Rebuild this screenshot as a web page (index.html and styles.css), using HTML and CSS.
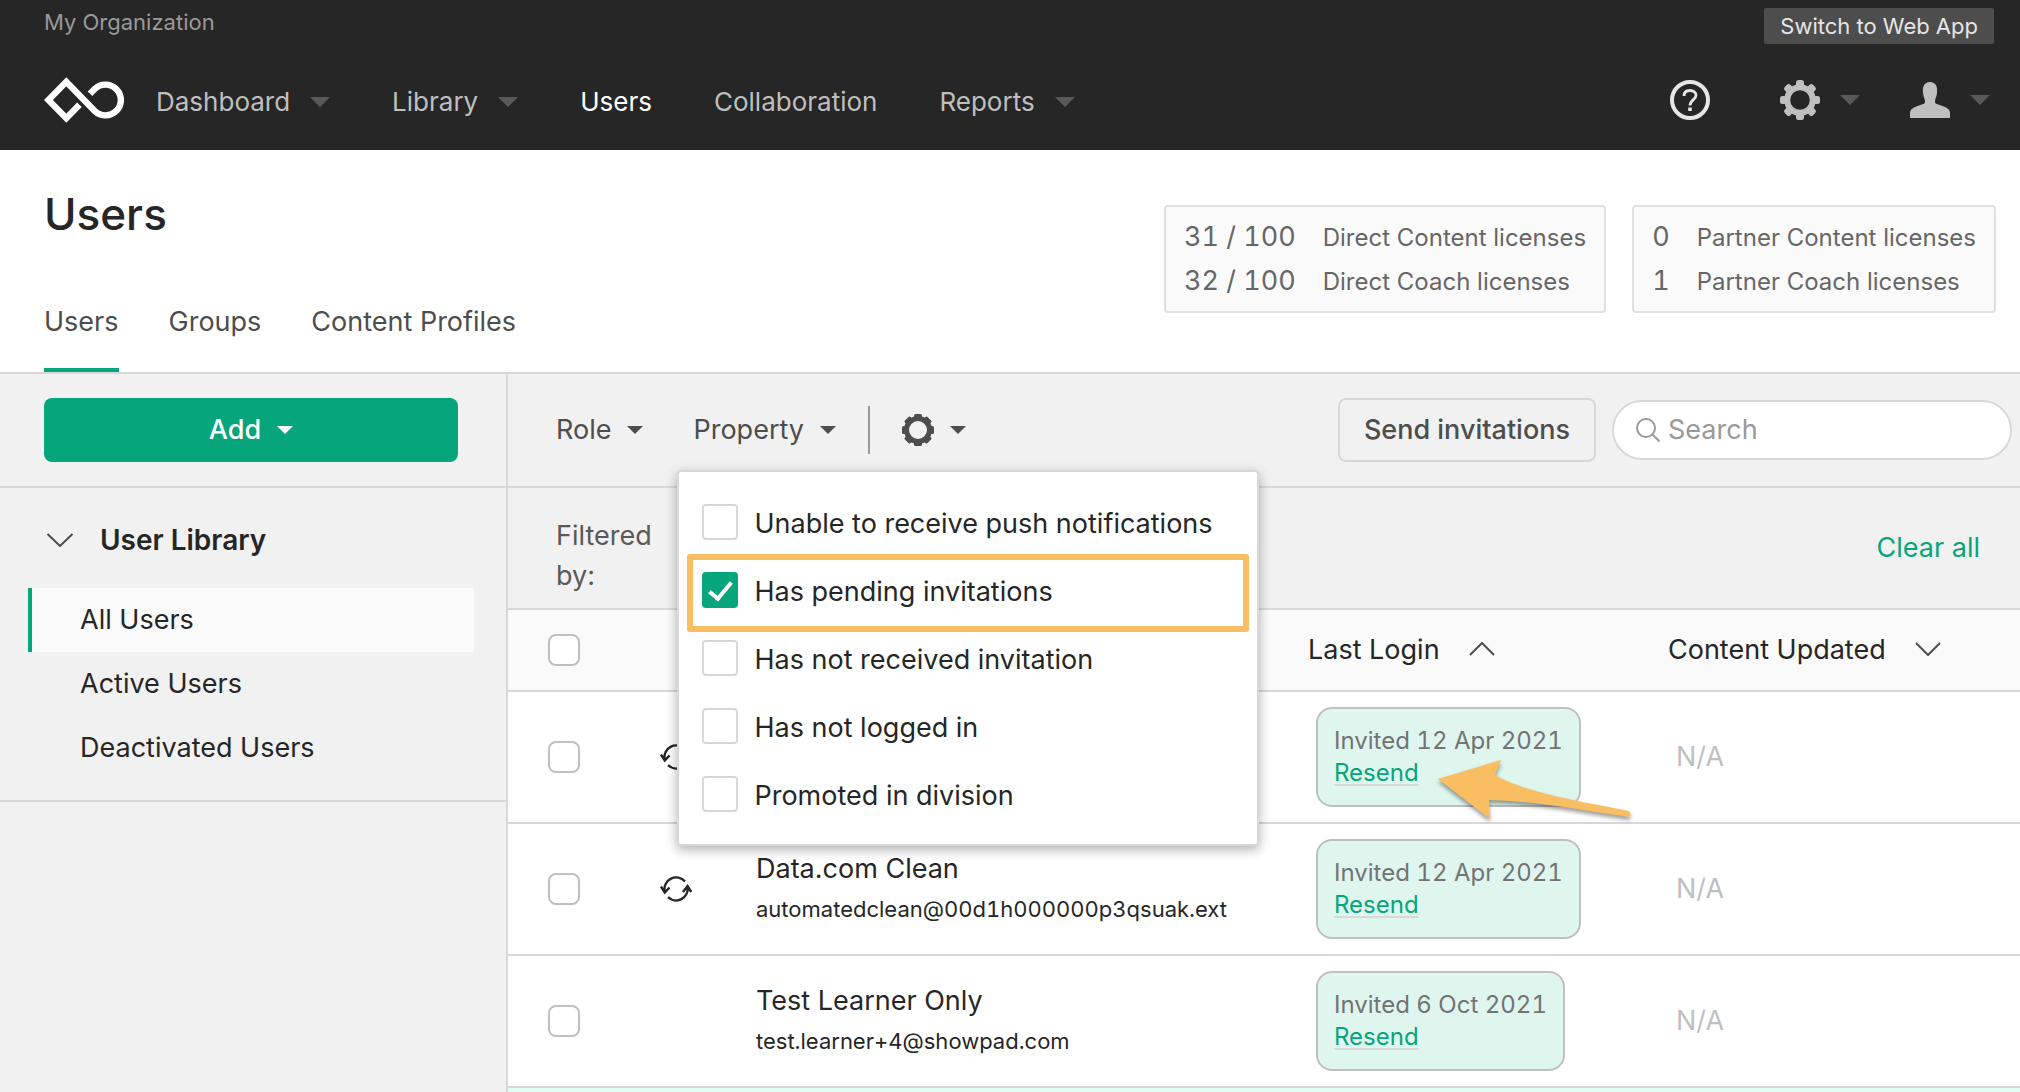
FILE: index.html
```
<!DOCTYPE html>
<html lang="en">
<head>
  <meta charset="UTF-8">
  <meta name="viewport" content="width=device-width, initial-scale=1">
  <title>Users</title>
  <link rel="stylesheet" href="styles.css">
</head>
<body>
  <!-- top bar -->
  <header class="topbar">
    <div class="topbar-row">
      <span class="org">My Organization</span>
      <button class="switch" type="button">Switch to Web App</button>
    </div>
    <div class="topbar-nav">
      <a class="logo" href="#" aria-label="Home">
        <svg width="80" height="46" viewBox="0 0 80 46" fill="none" stroke="#fff" stroke-width="6.4">
          <path d="M35.4 27.8L22.3 41.2L4.4 23L22.3 4.8L50.7 34A15.4 15.4 0 1 0 50.7 12L46 16.8"/>
        </svg>
      </a>
      <nav class="nav">
        <a href="#">Dashboard <i class="caret caret-lg"></i></a>
        <a href="#">Library <i class="caret caret-lg"></i></a>
        <a href="#" class="active">Users</a>
        <a href="#">Collaboration</a>
        <a href="#">Reports <i class="caret caret-lg"></i></a>
      </nav>
      <div class="tools">
        <button type="button" aria-label="Help">
          <svg width="40" height="40" viewBox="0 0 40 40" fill="none" stroke="#e6e6e6">
            <circle cx="20" cy="20" r="18" stroke-width="4"/>
            <path d="M14 16C14 12 16.500 10.500 20 10.500S26 12.500 26 15.500C26 19.500 20 20 20 25.500" stroke-width="2.800"/>
            <path d="M20 27.500V31" stroke-width="3.600"/>
          </svg>
        </button>
        <button type="button" aria-label="Settings">
          <svg width="40" height="40" viewBox="0 0 40 40" fill="#bfbfbf">
            <circle cx="20" cy="20" r="12.800" fill="none" stroke="#bfbfbf" stroke-width="6"/>
            <rect x="16" y="0" width="8" height="8" rx="2.500"/>
            <rect x="16" y="0" width="8" height="8" rx="2.500" transform="rotate(45 20 20)"/>
            <rect x="16" y="0" width="8" height="8" rx="2.500" transform="rotate(90 20 20)"/>
            <rect x="16" y="0" width="8" height="8" rx="2.500" transform="rotate(135 20 20)"/>
            <rect x="16" y="0" width="8" height="8" rx="2.500" transform="rotate(180 20 20)"/>
            <rect x="16" y="0" width="8" height="8" rx="2.500" transform="rotate(225 20 20)"/>
            <rect x="16" y="0" width="8" height="8" rx="2.500" transform="rotate(270 20 20)"/>
            <rect x="16" y="0" width="8" height="8" rx="2.500" transform="rotate(315 20 20)"/>
          </svg>
          <i class="caret caret-lg"></i>
        </button>
        <button type="button" aria-label="Account">
          <svg width="40" height="36" viewBox="0 0 40 36" fill="#bfbfbf">
            <path d="M20 0C26 0 27.800 5 27 11C26.500 15 25 17 25 19.500C25 22 27 22 31 23.500C37 25.500 40 27.500 40 31V36H0V31C0 27.500 3 25.500 9 23.500C13 22 15 22 15 19.500C15 17 13.500 15 13 11C12.200 5 14 0 20 0Z"/>
          </svg>
          <i class="caret caret-lg"></i>
        </button>
      </div>
    </div>
  </header>

  <!-- page title and tabs -->
  <div class="page-head">
    <div class="page-title">
      <h1>Users</h1>
      <nav class="tabs">
        <a href="#" class="active">Users</a>
        <a href="#">Groups</a>
        <a href="#">Content Profiles</a>
      </nav>
    </div>
    <div class="licenses">
      <div class="license">
        <b>31 / 100</b><span>Direct Content licenses</span>
        <b>32 / 100</b><span>Direct Coach licenses</span>
      </div>
      <div class="license">
        <b>0</b><span>Partner Content licenses</span>
        <b>1</b><span>Partner Coach licenses</span>
      </div>
    </div>
  </div>

  <div class="content">
    <!-- sidebar -->
    <aside class="sidebar">
      <div class="add-box">
        <button class="add" type="button">Add <i class="caret"></i></button>
      </div>
      <div class="library">
        <h2>
          <svg width="28" height="14" viewBox="0 0 28 14" fill="none" stroke="#4d4d4d" stroke-width="2"><path d="M1.500 1L14 13L26.500 1"/></svg>
          User Library
        </h2>
        <ul>
          <li><a href="#" class="active">All Users</a></li>
          <li><a href="#">Active Users</a></li>
          <li><a href="#">Deactivated Users</a></li>
        </ul>
      </div>
    </aside>

    <main class="main">
      <!-- toolbar -->
      <div class="toolbar">
        <button class="drop" type="button">Role <i class="caret"></i></button>
        <div class="property">
          <button class="drop" type="button">Property <i class="caret"></i></button>
          <div class="menu">
            <label><input type="checkbox"> Unable to receive push notifications</label>
            <label class="marked"><input type="checkbox" checked> Has pending invitations</label>
            <label><input type="checkbox"> Has not received invitation</label>
            <label><input type="checkbox"> Has not logged in</label>
            <label><input type="checkbox"> Promoted in division</label>
          </div>
        </div>
        <span class="line"></span>
        <button class="drop" type="button" aria-label="Options">
          <svg width="32" height="32" viewBox="0 0 32 32" fill="#4d4d4d">
            <circle cx="16" cy="16" r="11.500" fill="none" stroke="#4d4d4d" stroke-width="5"/>
            <rect x="12" y="0" width="8" height="5" rx="1.500"/>
            <rect x="12" y="0" width="8" height="5" rx="1.500" transform="rotate(45 16 16)"/>
            <rect x="12" y="0" width="8" height="5" rx="1.500" transform="rotate(90 16 16)"/>
            <rect x="12" y="0" width="8" height="5" rx="1.500" transform="rotate(135 16 16)"/>
            <rect x="12" y="0" width="8" height="5" rx="1.500" transform="rotate(180 16 16)"/>
            <rect x="12" y="0" width="8" height="5" rx="1.500" transform="rotate(225 16 16)"/>
            <rect x="12" y="0" width="8" height="5" rx="1.500" transform="rotate(270 16 16)"/>
            <rect x="12" y="0" width="8" height="5" rx="1.500" transform="rotate(315 16 16)"/>
          </svg>
          <i class="caret"></i>
        </button>
        <button class="send" type="button">Send invitations</button>
        <div class="search">
          <svg width="24" height="24" viewBox="0 0 24 24" fill="none" stroke="#999" stroke-width="2">
            <circle cx="10" cy="10" r="9"/>
            <path d="M16.500 16.500L23.500 23.500"/>
          </svg>
          <input type="text" placeholder="Search" aria-label="Search">
        </div>
      </div>

      <!-- filters -->
      <div class="filters">
        <span class="filters-label">Filtered by:</span>
        <a href="#">Clear all</a>
      </div>

      <!-- users -->
      <table class="users">
        <colgroup>
          <col class="col-check">
          <col class="col-sync">
          <col>
          <col class="col-login">
          <col class="col-updated">
        </colgroup>
        <thead>
          <tr>
            <th><input type="checkbox" aria-label="Select all"></th>
            <th></th>
            <th></th>
            <th>Last Login
              <svg class="sort" width="26" height="14" viewBox="0 0 26 14" fill="none" stroke="#4d4d4d" stroke-width="2"><path d="M1 13L13 1L25 13"/></svg>
            </th>
            <th>Content Updated
              <svg class="sort" width="26" height="14" viewBox="0 0 26 14" fill="none" stroke="#4d4d4d" stroke-width="2"><path d="M1 1L13 13L25 1"/></svg>
            </th>
          </tr>
        </thead>
        <tbody>
          <tr>
            <td><input type="checkbox" aria-label="Select user"></td>
            <td class="sync">
              <svg width="32" height="28" viewBox="0 0 32 28" fill="none" stroke="#262626" stroke-width="2.400">
                <path d="M25 6.500A11.600 11.600 0 0 0 4.800 16.500M1 11.500L4.800 17.500L9.500 12.500"/>
                <path d="M8 22.200A11.600 11.600 0 0 0 27.500 12M23 17L27.500 11L31.300 17"/>
              </svg>
            </td>
            <td></td>
            <td>
              <div class="pill">
                Invited 12 Apr 2021<br><a href="#">Resend</a>
                <svg class="arrow" width="200" height="70" viewBox="0 0 200 70">
                  <path fill="#f8be61" d="M2 22L65 3L59 18C88 35 140 44 193 54Q196 57 193 60C145 53 100 44 53 43L54 62Z"/>
                </svg>
              </div>
            </td>
            <td class="na">N/A</td>
          </tr>
          <tr>
            <td><input type="checkbox" aria-label="Select Data.com Clean"></td>
            <td class="sync">
              <svg width="32" height="28" viewBox="0 0 32 28" fill="none" stroke="#262626" stroke-width="2.400">
                <path d="M25 6.500A11.600 11.600 0 0 0 4.800 16.500M1 11.500L4.800 17.500L9.500 12.500"/>
                <path d="M8 22.200A11.600 11.600 0 0 0 27.500 12M23 17L27.500 11L31.300 17"/>
              </svg>
            </td>
            <td>
              <p class="name">Data.com Clean</p>
              <p class="email">automatedclean@00d1h000000p3qsuak.ext</p>
            </td>
            <td><div class="pill">Invited 12 Apr 2021<br><a href="#">Resend</a></div></td>
            <td class="na">N/A</td>
          </tr>
          <tr>
            <td><input type="checkbox" aria-label="Select Test Learner Only"></td>
            <td></td>
            <td>
              <p class="name">Test Learner Only</p>
              <p class="email">test.learner+4@showpad.com</p>
            </td>
            <td><div class="pill">Invited 6 Oct 2021<br><a href="#">Resend</a></div></td>
            <td class="na">N/A</td>
          </tr>
        </tbody>
      </table>
      <div class="next-row"></div>
    </main>
  </div>
</body>
</html>
```
FILE: styles.css
```
*,
*::before,
*::after{
  margin: 0;
  padding: 0;
  box-sizing: border-box;
}
body{
  display: flex;
  flex-direction: column;
  min-height: 100vh;
  font-family: Inter, "Liberation Sans", sans-serif;
  font-size: 27px;
  line-height: 40px;
  color: #262626;
  background: #fff;
}
ul{
  list-style: none;
}
a{
  color: inherit;
  text-decoration: none;
}
button,input{
  font: inherit;
  color: inherit;
}
button{
  background: none;
  border: 0;
  white-space: nowrap;
  cursor: pointer;
}
svg{
  display: block;
  flex: none;
}
.caret{
  flex: none;
  width: 16px;
  border: 8px solid transparent;
  border-top-color: currentColor;
  border-bottom: 0;
}
.caret-lg{
  width: 20px;
  border-width: 10px 10px 0;
  color: #595959;
}

/* top bar */
.topbar{
  height: 150px;
  padding-top: 8px;
  background: #262626;
}
.topbar-row{
  display: flex;
  justify-content: space-between;
  align-items: flex-start;
  padding: 0 26px 0 44px;
  font-size: 22px;
  line-height: 28px;
}
.org{
  color: #999;
}
.switch{
  height: 36px;
  padding: 0 16px;
  color: #e6e6e6;
  background: #4d4d4d;
  border-radius: 2px;
}
.topbar-nav{
  display: flex;
  align-items: center;
  height: 106px;
  padding: 6px 30px 0 44px;
  font-size: 26px;
}
.nav{
  display: flex;
  gap: 62px;
  margin-left: 32px;
  padding-top: 4px;
  color: #bfbfbf;
}
.nav a{
  display: flex;
  align-items: center;
  gap: 20px;
}
.nav .active{
  color: #fff;
}
.tools{
  display: flex;
  align-items: center;
  gap: 50px;
  margin-left: auto;
}
.tools button{
  display: flex;
  align-items: center;
  gap: 20px;
}
.tools button:first-child{
  margin-right: 20px;
}

/* title, tabs, licenses */
.page-head{
  display: flex;
  justify-content: space-between;
  align-items: flex-start;
  padding: 0 24px 0 44px;
  border-bottom: 2px solid #d8d8d8;
}
.page-title{
  padding-top: 34px;
}
h1{
  font-size: 44px;
  font-weight: 500;
  line-height: 60px;
}
.tabs{
  display: flex;
  gap: 50px;
  margin-top: 32px;
  color: #4d4d4d;
}
.tabs a{
  padding: 26px 0;
  border-bottom: 4px solid transparent;
}
.tabs .active{
  border-color: #06a57c;
}
.licenses{
  display: flex;
  gap: 26px;
  margin-top: 55px;
}
.license{
  display: grid;
  grid-template-columns: auto auto;
  grid-auto-rows: 44px;
  column-gap: 27px;
  align-items: baseline;
  padding: 8px 18px;
  line-height: 44px;
  color: #666;
  background: #fafafa;
  border: 2px solid #e0e0e0;
  border-radius: 4px;
}
.license b{
  font-size: 27px;
  font-weight: 400;
  font-variant-numeric: tabular-nums;
}
.license span{
  font-size: 24px;
}

.content{
  display: flex;
  flex: 1;
}

/* sidebar */
.sidebar{
  flex: none;
  width: 508px;
  background: #f1f1f1;
  border-right: 2px solid #d8d8d8;
}
.add-box{
  padding: 24px 48px 24px 44px;
  border-bottom: 2px solid #d8d8d8;
}
.add{
  display: flex;
  align-items: center;
  justify-content: center;
  gap: 16px;
  width: 100%;
  height: 64px;
  font-weight: 500;
  color: #fff;
  background: #06a57c;
  border-radius: 8px;
}
.library{
  padding: 24px 32px 20px 28px;
  border-bottom: 2px solid #d8d8d8;
}
h2{
  display: flex;
  align-items: center;
  gap: 26px;
  margin-bottom: 20px;
  padding-left: 18px;
  font-size: 28px;
  font-weight: 600;
  line-height: 56px;
}
.library a{
  display: block;
  padding-left: 48px;
  line-height: 64px;
  border-left: 4px solid transparent;
}
.library .active{
  background: #fafafa;
  border-color: #06a57c;
}

/* toolbar */
.main{
  flex: 1;
  min-width: 0;
}
.toolbar{
  display: flex;
  align-items: center;
  height: 114px;
  padding: 0 8px 0 48px;
  color: #4d4d4d;
  background: #f1f1f1;
  border-bottom: 2px solid #d8d8d8;
}
.drop{
  display: flex;
  align-items: center;
  gap: 16px;
  height: 64px;
}
.property{
  position: relative;
  margin-left: 50px;
}
.line{
  width: 2px;
  height: 48px;
  margin: 0 32px;
  background: #999;
}
.send{
  height: 64px;
  margin: 0 16px 0 auto;
  padding: 0 24px;
  font-weight: 500;
  border: 2px solid #d8d8d8;
  border-radius: 8px;
}
.search{
  display: flex;
  align-items: center;
  gap: 8px;
  width: 400px;
  height: 60px;
  padding: 0 22px;
  background: #fff;
  border: 2px solid #d8d8d8;
  border-radius: 30px;
}
.search input{
  flex: 1;
  min-width: 0;
  border: 0;
  outline: 0;
}
.search input::placeholder{
  color: #999;
}

/* property menu */
.menu{
  position: absolute;
  top: calc(100% + 8px);
  left: -16px;
  z-index: 10;
  width: 582px;
  padding: 16px 0;
  color: #262626;
  background: #fff;
  border: 2px solid #d8d8d8;
  border-radius: 4px;
  box-shadow: 0 4px 12px rgba(0,0,0,0.3);
}
.menu label{
  display: flex;
  align-items: center;
  gap: 16px;
  height: 68px;
  padding: 4px 0 0 23px;
  white-space: nowrap;
}
.marked{
  position: relative;
}
.marked::before{
  content: "";
  position: absolute;
  top: -2px;
  left: 8px;
  right: 8px;
  height: 78px;
  border: 6px solid #f8be61;
  border-radius: 3px;
}
input[type=checkbox]{
  appearance: none;
  flex: none;
  display: block;
  width: 32px;
  height: 32px;
  background: #fff;
  border: 2px solid #bfbfbf;
  border-radius: 8px;
}
.menu input[type=checkbox]{
  width: 36px;
  height: 36px;
  margin-bottom: 4px;
  border-color: #d8d8d8;
  border-radius: 4px;
}
.menu input[type=checkbox]:checked{
  background: #06a57c;
  border-color: #06a57c;
}
.menu input:checked::after{
  content: "";
  display: block;
  width: 13px;
  height: 23px;
  margin: 3px auto 0;
  border: solid #fff;
  border-width: 0 4px 4px 0;
  transform: rotate(40deg);
}

/* filters */
.filters{
  display: flex;
  align-items: center;
  justify-content: space-between;
  height: 122px;
  padding: 0 40px 0 48px;
  color: #595959;
  background: #f1f1f1;
  border-bottom: 2px solid #d8d8d8;
}
.filters-label{
  width: 112px;
  padding-top: 16px;
}
.filters a{
  color: #06a57c;
}

/* table */
.users{
  width: 100%;
  table-layout: fixed;
  border-spacing: 0;
}
.col-check{
  width: 112px;
}
.col-sync{
  width: 136px;
}
.col-login{
  width: 360px;
}
.col-updated{
  width: 352px;
}
.users th{
  height: 82px;
  font-weight: 400;
  text-align: left;
  white-space: nowrap;
  background: #fafafa;
  border-bottom: 2px solid #d8d8d8;
}
.users td{
  height: 132px;
  border-bottom: 2px solid #d8d8d8;
}
.users th:first-child,
.users td:first-child{
  padding-left: 40px;
}
.users td:nth-child(n+4){
  padding-left: 8px;
}
.users .sync{
  padding-left: 40px;
}
.sort{
  display: inline-block;
  margin-left: 22px;
  vertical-align: 3px;
}
.email{
  font-size: 22px;
  font-variant-numeric: tabular-nums;
}
.pill{
  position: relative;
  width: fit-content;
  padding: 16px;
  font-size: 24px;
  font-variant-numeric: tabular-nums;
  line-height: 32px;
  color: #737373;
  background: #dff6ef;
  border: 2px solid #bfbfbf;
  border-radius: 16px;
}
.pill a{
  color: #06a57c;
  text-decoration: underline 2px #d8d8d8;
  text-underline-offset: 3px;
  text-decoration-skip-ink: none;
}
.arrow{
  position: absolute;
  top: 48px;
  left: 118px;
  z-index: 1;
  filter: drop-shadow(0 3px 2px rgba(0,0,0,0.4));
}
.na{
  color: #bfbfbf;
}
.next-row{
  height: 4px;
  background: #e0fdf4;
}
```
